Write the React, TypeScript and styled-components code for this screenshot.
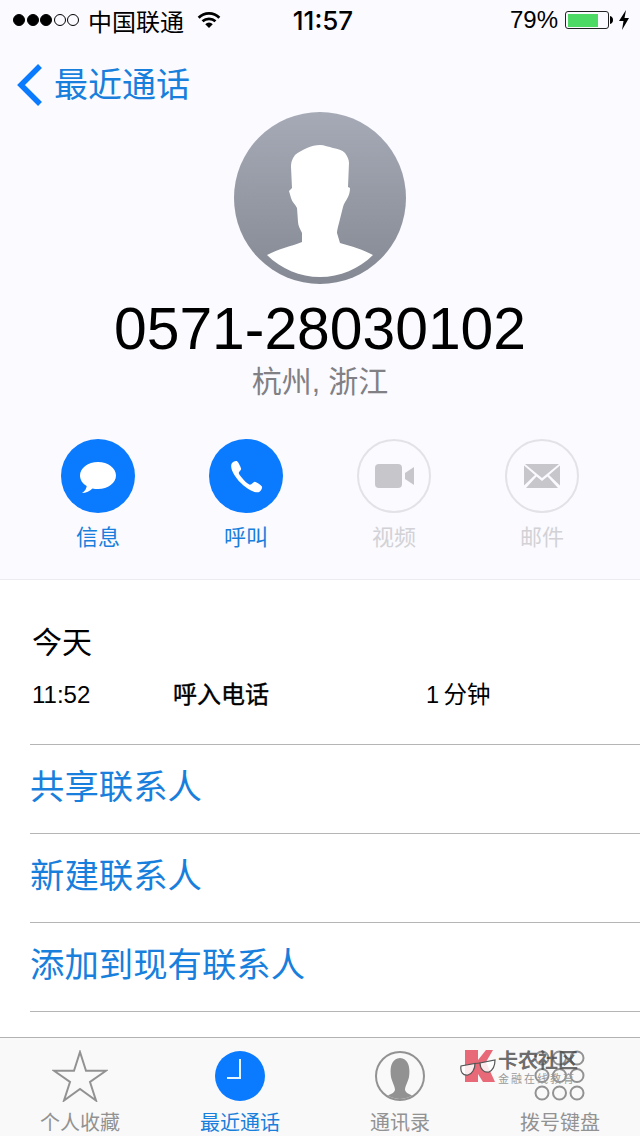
import { createGlobalStyle } from 'styled-components';
import styled from 'styled-components';

const GlobalStyle = createGlobalStyle`
  html, body {
    margin: 0;
    padding: 0;
    background: #ffffff;
  }
  body {
    font-family: "Liberation Sans", "Noto Sans CJK SC", sans-serif;
  }
`;

const Screen = styled.div`
  width: 640px;
  height: 1136px;
  display: flex;
  flex-direction: column;
  overflow: hidden;
  position: relative;
  background: #fff;
`;

const Head = styled.div`
  height: 579px;
  flex: none;
  background: #fbfaff;
  border-bottom: 1px solid #ececf0;
  display: flex;
  flex-direction: column;
`;

const StatusBar = styled.div`
  height: 40px;
  padding: 0 10px 0 13px;
  display: grid;
  grid-template-columns: 1fr auto 1fr;
  align-items: center;
  color: #000;
`;

const StatusLeft = styled.div`
  display: flex;
  align-items: center;
  font-size: 24px;
`;

const Signal = styled.div`
  display: flex;
  gap: 1.5px;
  margin-right: 9px;
`;

const Dot = styled.span<{ $on: boolean }>`
  width: 12px;
  height: 12px;
  box-sizing: border-box;
  border-radius: 50%;
  border: 1px solid #000;
  background: ${({ $on }) => ($on ? '#000' : 'transparent')};
`;

const Clock = styled.div`
  margin-left: 3px;
  font-size: 26px;
  font-family: "Inter", sans-serif;
  font-weight: 500;
`;

const StatusRight = styled.div`
  display: flex;
  align-items: center;
  justify-content: flex-end;
  font-size: 24px;
`;

const Battery = styled.div`
  width: 44px;
  height: 18px;
  box-sizing: border-box;
  margin-left: 7px;
  padding: 1.5px;
  border: 1px solid #222;
  border-radius: 3px;
  display: flex;
`;

const BatteryFill = styled.div`
  width: 79%;
  background: #4cd964;
`;

const BackRow = styled.div`
  height: 72px;
  box-sizing: border-box;
  padding: 18px 0 0 16px;
  display: flex;
  align-items: center;
  gap: 10px;
  color: #187fdc;
  font-size: 34px;
`;

const BackLabel = styled.span`
  padding-bottom: 5px;
`;

const Profile = styled.div`
  display: flex;
  flex-direction: column;
  align-items: center;
`;

const Avatar = styled.div`
  width: 172px;
  height: 172px;
  border-radius: 50%;
  background: linear-gradient(#a5aab6, #858993);
  overflow: hidden;
`;

const Number = styled.div`
  margin-top: 11px;
  font-size: 58.8px;
  line-height: 68px;
  color: #000;
`;

const Place = styled.div`
  margin-top: 1px;
  font-size: 30px;
  line-height: 36px;
  color: #808085;
`;

const Actions = styled.div`
  margin-top: 39px;
  padding-left: 24px;
  display: grid;
  grid-template-columns: repeat(4, 148px);
`;

const Action = styled.div<{ $off?: boolean }>`
  display: flex;
  flex-direction: column;
  align-items: center;
  gap: 12px;
  font-size: 22px;
  line-height: 26px;
  color: ${({ $off }) => ($off ? '#d2d2d6' : '#187fdc')};
`;

const Round = styled.div<{ $off?: boolean }>`
  width: 74px;
  height: 74px;
  box-sizing: border-box;
  border-radius: 50%;
  display: flex;
  align-items: center;
  justify-content: center;
  background: ${({ $off }) => ($off ? 'transparent' : '#0a7aff')};
  border: ${({ $off }) => ($off ? '2px solid #e3e3e7' : 'none')};
`;

const Calls = styled.div`
  padding: 43px 0 0 32px;
`;

const Day = styled.div`
  font-size: 30px;
  line-height: 40px;
  color: #000;
`;

const CallRow = styled.div`
  margin-top: 17px;
  display: grid;
  grid-template-columns: 141px 253px auto;
  font-size: 24px;
  line-height: 30px;
  color: #000;
`;

const CallType = styled.div`
  -webkit-text-stroke: 0.4px #000;
`;

const Duration = styled.div`
  font-size: 23.5px;
  word-spacing: -2px;
`;

const Links = styled.div`
  margin: 34px 0 0 30px;
  display: flex;
  flex-direction: column;
`;

const LinkRow = styled.div`
  height: 89px;
  box-sizing: border-box;
  padding-bottom: 10px;
  border-top: 1px solid #b5b5b8;
  display: flex;
  align-items: center;
  font-size: 34.4px;
  color: #187fdc;
  &:last-child {
    height: 0;
    padding: 0;
  }
`;

const TabBar = styled.div`
  position: absolute;
  left: 0;
  right: 0;
  bottom: 0;
  height: 98px;
  background: #f9f9f9;
  border-top: 1px solid #b2b2b2;
  display: grid;
  grid-template-columns: repeat(4, 1fr);
`;

const Tab = styled.div<{ $active?: boolean }>`
  display: flex;
  flex-direction: column;
  align-items: center;
  padding-top: 12px;
  gap: 9px;
  font-size: 20px;
  line-height: 24px;
  color: ${({ $active }) => ($active ? '#187fdc' : '#929292')};
`;

const TabIcon = styled.svg`
  display: block;
  width: 56px;
  height: 52px;
`;

const Watermark = styled.div`
  position: absolute;
  left: 460px;
  top: 1048px;
  display: flex;
  gap: 1px;
`;

const WatermarkText = styled.div`
  display: flex;
  flex-direction: column;
  padding-top: 2px;
  font-size: 20px;
  line-height: 22px;
  font-weight: 700;
  color: rgba(70, 70, 70, 0.8);
  span {
    font-size: 11px;
    line-height: 14px;
    font-weight: 400;
    letter-spacing: 2px;
    color: #999;
  }
`;

export default function App() {
  return (
    <Screen>
      <GlobalStyle />
      <Head>
        <StatusBar>
          <StatusLeft>
            <Signal>
              {[1, 1, 1, 0, 0].map((on, i) => (
                <Dot key={i} $on={!!on} />
              ))}
            </Signal>
            中国联通
            <svg width="24" height="18" viewBox="0 0 26 20" style={{ marginLeft: 13 }}>
              <path d="M1.5 7.5 A16 16 0 0 1 24.5 7.5" stroke="#000" strokeWidth="3" fill="none" />
              <path d="M5.8 11.5 A10.5 10.5 0 0 1 20.2 11.5" stroke="#000" strokeWidth="3" fill="none" />
              <path d="M13 19 L8.8 14.6 A6 6 0 0 1 17.2 14.6 Z" fill="#000" />
            </svg>
          </StatusLeft>
          <Clock>11:57</Clock>
          <StatusRight>
            79%
            <Battery>
              <BatteryFill />
            </Battery>
            <svg width="4" height="8" viewBox="0 0 4 8" style={{ marginLeft: 1 }}>
              <path d="M0 0 A4 4 0 0 1 3 4 A4 4 0 0 1 0 8 Z" fill="#000" />
            </svg>
            <svg width="12" height="20" viewBox="0 0 12 20" style={{ marginLeft: 4 }}>
              <path d="M8 0 L1 11 H5.5 L4 20 L11 8 H6.5 Z" fill="#000" />
            </svg>
          </StatusRight>
        </StatusBar>
        <BackRow>
          <svg width="28" height="44" viewBox="0 0 28 44">
            <path d="M24 3 L5 22 L24 41" stroke="#0a7aff" strokeWidth="5.5" fill="none" />
          </svg>
          <BackLabel>最近通话</BackLabel>
        </BackRow>
        <Profile>
          <Avatar>
            <svg width="172" height="172" viewBox="0 0 172 172">
              <path
                d="M33 143 C44 137 58 134 68 130 L68 121 C66 117 64 113 64 110 L63 96 C61 92 58 90 57 86 L55 79 L58 76 L57 55 C57 49 59 46 61 43 C64 40 69 38 73 36 C77 34 82 33 86 33 C90 33 95 35 99 36 C104 37 108 38 111 41 C113 44 115 47 115 51 L114 75 L116 76 C116 80 115 83 114 85 C112 89 110 91 109 95 L105 111 C104 115 103 118 103 121 L106 131 C117 134 130 138 139 143 C125 157 106 165 86 165 C66 165 47 157 33 143 Z"
                fill="#fff"
              />
            </svg>
          </Avatar>
          <Number>0571-28030102</Number>
          <Place>杭州, 浙江</Place>
        </Profile>
        <Actions>
          <Action>
            <Round>
              <svg width="36" height="31" viewBox="2 1 36 31" style={{ marginTop: 2 }}>
                <path d="M20 1 C30 1 38 7 38 14.5 C38 22 30 28 20 28 C18 28 16 27.8 14.5 27.4 C12 30 8 32 4 32 C7 30 8.5 27.5 8.7 25 C4.5 22.5 2 18.7 2 14.5 C2 7 10 1 20 1 Z" fill="#fff" />
              </svg>
            </Round>
            信息
          </Action>
          <Action>
            <Round>
              <svg width="33" height="33" viewBox="1.5 0 34 34">
                <path d="M3 4 C4 2 7 0.5 8.5 1 C10 2 12.5 7 13 9 C13 11 10.5 12 10.5 13.5 C11 16 19 25 22 25.5 C24 25.5 25.5 22.5 27 22.5 C29 23 33.5 26 34.5 27.5 C35 29.5 33 32.5 31 33.2 C27 34 20 31 13 24 C6 17 1.5 9 3 4 Z" fill="#fff" />
              </svg>
            </Round>
            呼叫
          </Action>
          <Action $off>
            <Round $off>
              <svg width="39" height="24" viewBox="0 0 39 24">
                <rect x="0" y="0" width="27" height="24" rx="4" fill="#c6c6cb" />
                <path d="M30 9 L39 3 V21 L30 15 Z" fill="#c6c6cb" />
              </svg>
            </Round>
            视频
          </Action>
          <Action $off>
            <Round $off>
              <svg width="36" height="24" viewBox="0 0 36 24">
                <path d="M1 0 H35 L18 14 Z" fill="#c6c6cb" />
                <path d="M0 1.5 L11 11 L0 21.5 Z M36 1.5 L25 11 L36 21.5 Z" fill="#c6c6cb" />
                <path d="M2 24 L12.5 12.5 L18 17 L23.5 12.5 L34 24 Z" fill="#c6c6cb" />
              </svg>
            </Round>
            邮件
          </Action>
        </Actions>
      </Head>
      <Calls>
        <Day>今天</Day>
        <CallRow>
          <div>11:52</div>
          <CallType>呼入电话</CallType>
          <Duration>1 分钟</Duration>
        </CallRow>
      </Calls>
      <Links>
        <LinkRow>共享联系人</LinkRow>
        <LinkRow>新建联系人</LinkRow>
        <LinkRow>添加到现有联系人</LinkRow>
        <LinkRow />
      </Links>
      <TabBar>
        <Tab>
          <TabIcon viewBox="0 0 56 52">
            <path d="M28 2 L34 20.7 L54 20.7 L38 32 L44 50.5 L28 39 L12 50.5 L18 32 L2 20.7 L22 20.7 Z" fill="none" stroke="#929292" strokeWidth="2" />
          </TabIcon>
          个人收藏
        </Tab>
        <Tab $active>
          <TabIcon viewBox="0 0 56 52">
            <circle cx="28" cy="26" r="25" fill="#0a7aff" />
            <path d="M28 9 V28 H15" fill="none" stroke="#e6f6ff" strokeWidth="2" />
          </TabIcon>
          最近通话
        </Tab>
        <Tab>
          <TabIcon viewBox="0 0 56 52">
            <defs>
              <clipPath id="contact-clip">
                <circle cx="28" cy="26" r="23" />
              </clipPath>
            </defs>
            <g clipPath="url(#contact-clip)">
              <path d="M9 50 C15 45 22 44 23 40 C23 36 20 32 19 27 C18 20 18 9 28 8 C38 9 38 20 37 27 C36 32 33 36 33 40 C34 44 41 45 47 50 V54 H9 Z" fill="#929292" />
            </g>
            <circle cx="28" cy="26" r="24" fill="none" stroke="#929292" strokeWidth="2" />
          </TabIcon>
          通讯录
        </Tab>
        <Tab>
          <TabIcon viewBox="0 0 56 52">
            {[0, 1, 2].map((r) =>
              [0, 1, 2].map((c) => (
                <circle key={`${r}${c}`} cx={10 + c * 17.5} cy={8 + r * 17.5} r="6.5" fill="none" stroke="#929292" strokeWidth="2" />
              )),
            )}
          </TabIcon>
          拨号键盘
        </Tab>
      </TabBar>
      <Watermark>
        <svg width="37" height="36" viewBox="0 0 37 36">
          <path d="M5 2 H18 V12 L26 2 H33 L26 14 L35 34 H23 L18 26 V34 H5 Z" fill="#e86a78" />
          <path d="M1 18 C0 24 3 28 8 27 C12 26 15 21 15 15.5 Z" fill="#fff" fillOpacity="0.85" stroke="#555" strokeWidth="1.2" />
          <path d="M20 15 C20 21 24 25 29 24 C33 22 35 17 35 12 Z" fill="#fff" fillOpacity="0.85" stroke="#555" strokeWidth="1.2" />
          <path d="M15 15.5 L20 15" fill="none" stroke="#555" strokeWidth="1.2" />
        </svg>
        <WatermarkText>
          卡农社区
          <span>金融在线教育</span>
        </WatermarkText>
      </Watermark>
    </Screen>
  );
}
